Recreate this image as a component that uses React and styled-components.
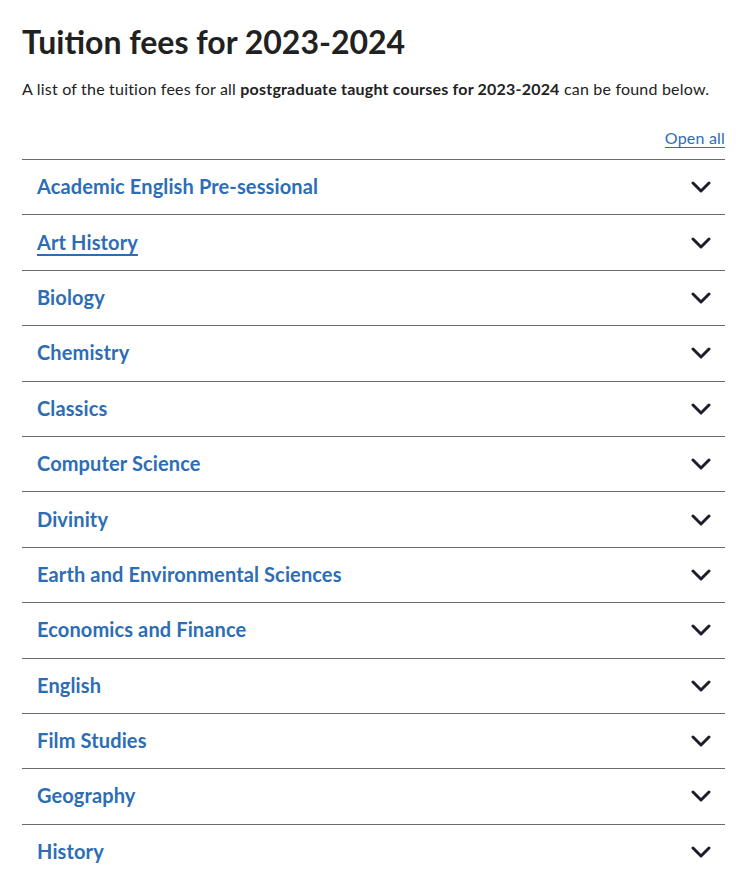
import styled, { createGlobalStyle } from 'styled-components';

const GlobalStyle = createGlobalStyle`
  html, body {
    margin: 0;
    padding: 0;
    background: #fff;
  }
  body {
    font-family: Lato, "Open Sans", Arial, sans-serif;
    color: #222;
  }
`;

const Page = styled.main`
  padding: 22px 23px 0 22px;
`;

const Title = styled.h1`
  margin: 0;
  font-size: 32px;
  line-height: 40px;
  font-weight: 700;
  color: #212121;
`;

const Intro = styled.p`
  margin: 15px 0 0;
  font-size: 16px;
  line-height: 24px;
  letter-spacing: 0.2px;

  strong {
    font-weight: 700;
  }
`;

const Toolbar = styled.div`
  display: flex;
  justify-content: flex-end;
  margin-top: 25px;
`;

const OpenAll = styled.a`
  font-size: 16px;
  line-height: 24px;
  letter-spacing: 0.2px;
  color: #2d6db5;
  text-decoration: underline;
  text-underline-offset: 3px;
  cursor: pointer;
`;

const List = styled.ul`
  list-style: none;
  margin: 9px 0 0;
  padding: 0;
  border-top: 1px solid #6b6b6b;
`;

const Item = styled.li`
  display: flex;
  align-items: center;
  justify-content: space-between;
  height: 54.4px;
  padding: 0 14px 0 15px;
  border-bottom: 1px solid #6b6b6b;
`;

const ItemLabel = styled.a`
  font-size: 20px;
  font-weight: 700;
  letter-spacing: 0.12px;
  color: #2d6db5;
  margin-top: -2px;
  text-decoration: ${({ $active }) => ($active ? 'underline' : 'none')};
  text-decoration-thickness: 2px;
  text-underline-offset: 4px;
  cursor: pointer;
`;

const Chevron = () => (
  <svg width="20" height="12" viewBox="0 0 20 12" fill="none">
    <path d="M2 2 L10 10 L18 2" stroke="#1d1d2b" strokeWidth="3" strokeLinecap="round" strokeLinejoin="round" />
  </svg>
);

const subjects = [
  'Academic English Pre-sessional',
  'Art History',
  'Biology',
  'Chemistry',
  'Classics',
  'Computer Science',
  'Divinity',
  'Earth and Environmental Sciences',
  'Economics and Finance',
  'English',
  'Film Studies',
  'Geography',
  'History',
];

export default function App() {
  return (
    <>
      <GlobalStyle />
      <Page>
        <Title>Tuition fees for 2023-2024</Title>
        <Intro>
          A list of the tuition fees for all <strong>postgraduate taught courses for 2023-2024</strong> can be found below.
        </Intro>
        <Toolbar>
          <OpenAll>Open all</OpenAll>
        </Toolbar>
        <List>
          {subjects.map((name) => (
            <Item key={name}>
              <ItemLabel $active={name === 'Art History'}>{name}</ItemLabel>
              <Chevron />
            </Item>
          ))}
        </List>
      </Page>
    </>
  );
}
